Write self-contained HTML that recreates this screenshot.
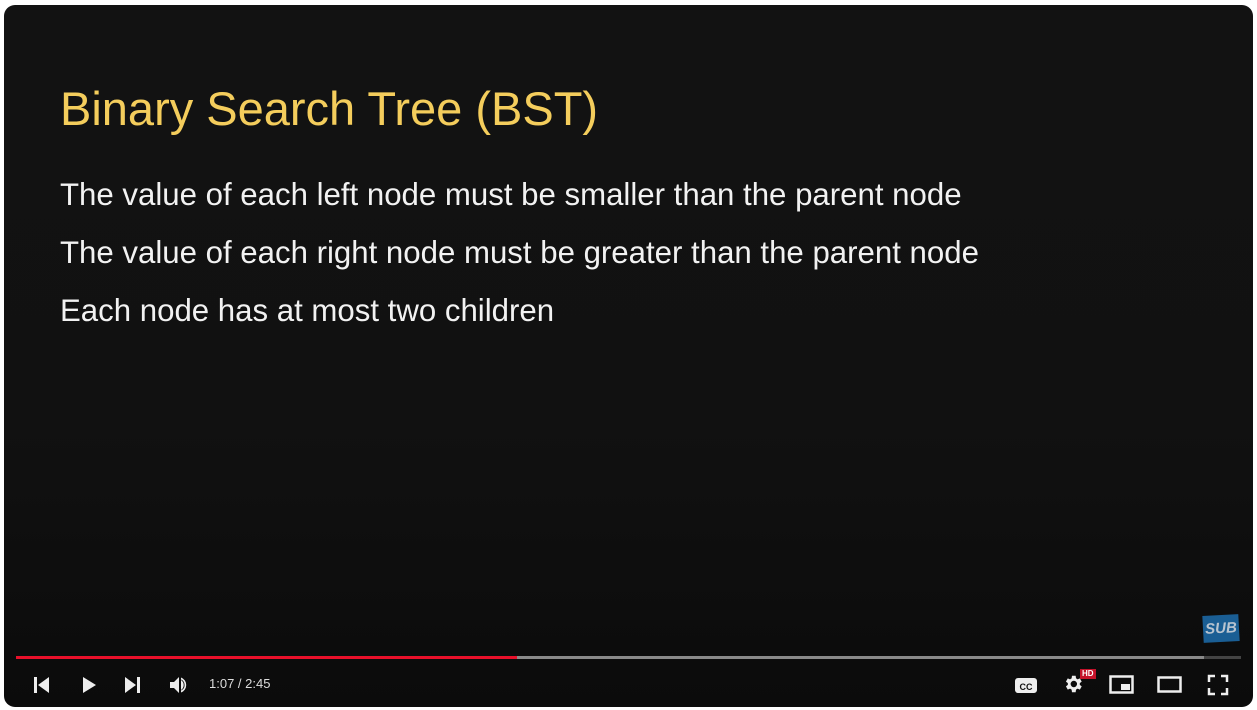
<!DOCTYPE html>
<html><head><style>
body{margin:0;width:1257px;height:710px;background:#fff;overflow:hidden;font-family:"Liberation Sans",sans-serif;position:relative}
.v{position:absolute;left:4px;top:5px;width:1249px;height:702px;border-radius:11px;background:linear-gradient(#121212 0%,#111 60%,#0b0b0b 100%);overflow:hidden}
.t{position:absolute;left:56px;top:76px;font-size:47px;color:#f4cd5c}
.p{position:absolute;left:56px;font-size:31.2px;color:#f2f2f2}
.bar{position:absolute;top:651px;height:3px}
.i{position:absolute;fill:#eee}
.time{position:absolute;left:205px;top:671px;font-size:13px;color:#ddd}
</style></head><body>
<div class="v">
<div class="t">Binary Search Tree (BST)</div>
<div class="p" style="top:172px">The value of each left node must be smaller than the parent node</div>
<div class="p" style="top:230px">The value of each right node must be greater than the parent node</div>
<div class="p" style="top:288px">Each node has at most two children</div>
<div style="position:absolute;left:1199px;top:610px;width:36px;height:27px;background:#1a5e94;transform:rotate(-3deg);color:#b8c4d0;font:italic bold 15px 'Liberation Sans',sans-serif;text-align:center;line-height:27px">SUB</div>
<div class="bar" style="left:12px;width:501px;background:#e8102a"></div>
<div class="bar" style="left:513px;width:687px;background:#8a8a8a"></div>
<div class="bar" style="left:1200px;width:37px;background:#444"></div>
<svg class="i" style="left:28px;top:670px" width="20" height="20" viewBox="0 0 20 20"><rect x="2" y="2" width="3" height="16"/><path d="M17 2v16L6 10z"/></svg>
<svg class="i" style="left:75px;top:670px" width="20" height="20" viewBox="0 0 20 20"><path d="M4 2v16l13-8z"/></svg>
<svg class="i" style="left:118px;top:670px" width="20" height="20" viewBox="0 0 20 20"><path d="M3 2v16l11-8z"/><rect x="15" y="2" width="3" height="16"/></svg>
<svg class="i" style="left:164px;top:669px" width="22" height="22" viewBox="0 0 22 22"><path d="M2 8h4l5-5v16l-5-5H2z"/><path d="M13 6a6 6 0 0 1 0 10z"/><path d="M13 3.5a8 8 0 0 1 0 15v-2a6 6 0 0 0 0-11z"/></svg>
<div class="time">1:07 / 2:45</div>
<svg class="i" style="left:1011px;top:670px" width="22" height="20" viewBox="0 0 22 20"><rect x="0" y="3" width="22" height="15" rx="3"/><text x="11" y="15" font-size="9" font-weight="bold" text-anchor="middle" fill="#111" font-family="Liberation Sans">CC</text></svg>
<svg class="i" style="left:1058px;top:668px" width="22" height="22" viewBox="0 0 24 24"><path d="M19.4 13a7.5 7.5 0 0 0 0-2l2.1-1.6-2-3.5-2.5 1a7 7 0 0 0-1.7-1L14.9 3h-4l-.4 2.9a7 7 0 0 0-1.7 1l-2.5-1-2 3.5L6.4 11a7.5 7.5 0 0 0 0 2l-2.1 1.6 2 3.5 2.5-1a7 7 0 0 0 1.7 1l.4 2.9h4l.4-2.9a7 7 0 0 0 1.7-1l2.5 1 2-3.5zM12.9 15.5a3.5 3.5 0 1 1 0-7 3.5 3.5 0 0 1 0 7z"/></svg>
<div style="position:absolute;left:1076px;top:664px;background:#c4122a;color:#fff;font:bold 8px 'Liberation Sans',sans-serif;padding:0 2px;line-height:10px">HD</div>
<svg style="position:absolute;left:1105px;top:670px" width="26" height="20" viewBox="0 0 26 20"><rect x="1.5" y="1.5" width="22" height="16" fill="none" stroke="#eee" stroke-width="2.5"/><rect x="12" y="9" width="9" height="6" fill="#eee"/></svg>
<svg style="position:absolute;left:1153px;top:671px" width="26" height="18" viewBox="0 0 26 18"><rect x="1.5" y="1.5" width="22" height="14" fill="none" stroke="#eee" stroke-width="2.5"/></svg>
<svg style="position:absolute;left:1203px;top:669px" width="22" height="22" viewBox="0 0 22 22" fill="none" stroke="#eee" stroke-width="2.5"><path d="M2 8V2h6M14 2h6v6M20 14v6h-6M8 20H2v-6"/></svg>
</div>
</body></html>
